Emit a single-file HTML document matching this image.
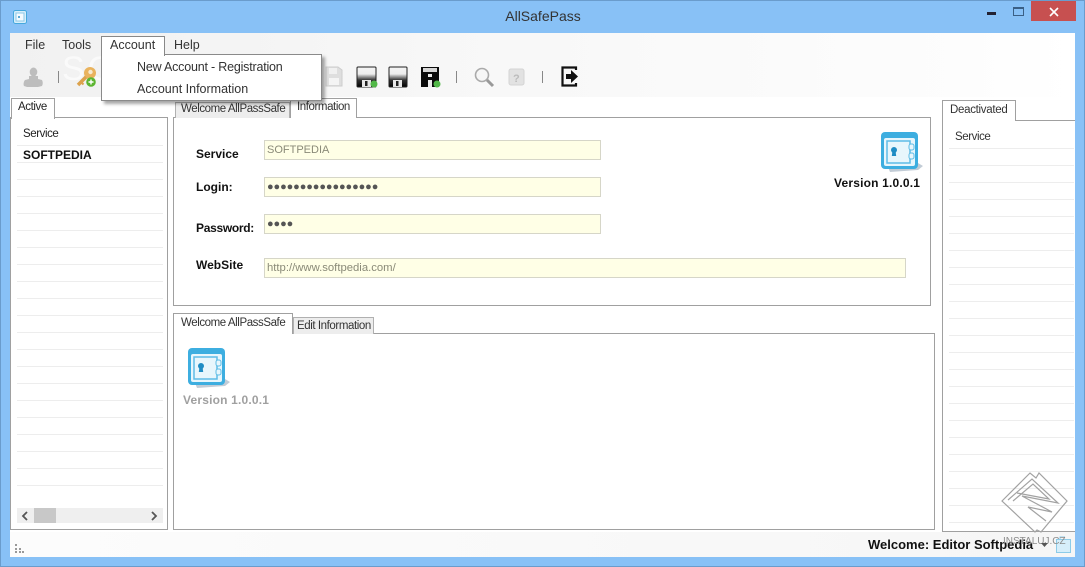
<!DOCTYPE html>
<html><head><meta charset="utf-8"><style>
html,body{margin:0;padding:0;width:1085px;height:567px;overflow:hidden;background:#88c1f6;font-family:"Liberation Sans",sans-serif;color:#222}
div,span{position:absolute;box-sizing:border-box;white-space:nowrap}
.t{font-size:11.5px;line-height:14px;letter-spacing:-.42px}
.m{font-size:12.5px;line-height:14px;color:#333}
.b{font-weight:bold;font-size:12px;line-height:14px;color:#111}
.f{background:#ffffe6;border:1px solid #d6d6c8;font-size:11.5px;line-height:18px;padding-left:2px;color:#8a8a78}
.box{background:#fff;border:1px solid #a0a0a0}
.ln{left:0;height:1px;background:#ededed}
</style></head><body>
<div style="left:0;top:0;width:1085px;height:567px;border:1px solid #6a9ccc"></div>
<!-- title -->
<svg style="position:absolute;left:13px;top:10px" width="14" height="14"><rect x=".5" y=".5" width="13" height="13" rx="2" fill="#d8effa" stroke="#45a8dc"/><rect x="3" y="3" width="8" height="8" fill="#f4fbff" stroke="#8cc8e8"/><circle cx="6" cy="7" r="1" fill="#2a8fc8"/></svg>
<div style="left:0;top:8px;width:1086px;text-align:center;font-size:14px;line-height:17px;color:#333">AllSafePass</div>
<div style="left:987px;top:12px;width:9px;height:3px;background:#223"></div>
<div style="left:1013px;top:7px;width:11px;height:9px;border:1px solid #3a5f85;border-top-width:2px"></div>
<div style="left:1031px;top:1px;width:45px;height:20px;background:#c75050"></div>
<svg style="position:absolute;left:1049px;top:7px" width="10" height="10"><path d="M1 1L9 9M9 1L1 9" stroke="#fff" stroke-width="1.600"/></svg>
<!-- client -->
<div style="left:10px;top:33px;width:1065px;height:524px;background:#fff"></div>
<div style="left:10px;top:33px;width:1065px;height:64px;background:linear-gradient(90deg,#f1f1f1,#f7f7f7 40%,#fdfdfd 90%,#fff)"></div>
<div style="left:10px;top:532px;width:1065px;height:25px;background:linear-gradient(90deg,#fcfcfc,#f6f6f6)"></div>
<div class="m" style="left:25px;top:38px">File</div>
<div class="m" style="left:62px;top:38px">Tools</div>
<div class="m" style="left:174px;top:38px">Help</div>
<div style="left:62px;top:52px;font-size:34px;line-height:34px;color:#fafafa;letter-spacing:3px">SOFTPEDIA</div>
<!-- toolbar -->
<svg style="position:absolute;left:20px;top:60px" width="580" height="32">
<defs><linearGradient id="g" x1="0" y1="0" x2="0" y2="1"><stop offset="0" stop-color="#f4f4f4"/><stop offset=".35" stop-color="#eee"/><stop offset=".65" stop-color="#333"/><stop offset="1" stop-color="#000"/></linearGradient></defs>
<g fill="#bdbdbd"><ellipse cx="13.500" cy="12" rx="3.800" ry="4.500"/><path d="M9 16h9v3l4 1c1 2 1 4 0 6l-4 1H7l-3-1c-1-2 0-5 1-6l4-1z"/></g>
<rect x="38" y="11" width="1" height="12" fill="#888"/>
<g transform="translate(56,6)"><ellipse cx="14" cy="7" rx="6" ry="6" fill="#e9b35e"/><circle cx="14.500" cy="6" r="2.200" fill="#f7ead0"/><path d="M10 11L2 19" stroke="#dca24c" stroke-width="3.500"/><path d="M5 16l2.500 2.500" stroke="#dca24c" stroke-width="2"/><circle cx="15" cy="16" r="4.800" fill="#5cb531"/><path d="M12.500 16h5M15 13.500v5" stroke="#fff" stroke-width="1.400"/></g>
<g transform="translate(306,7)"><path d="M0 0h12l4 3v16H0z" fill="#dedede" stroke="#cdcdcd"/><rect x="3" y="1" width="8" height="6" fill="#f0f0f0"/><rect x="3" y="11" width="10" height="7" fill="#f4f4f4"/></g>
<rect x="337" y="7" width="19" height="20" rx="1" fill="url(#g)" stroke="#222"/><rect x="342" y="20" width="9" height="7" fill="#e8e8e8"/><rect x="345" y="21" width="2.500" height="5" fill="#222"/><circle cx="354" cy="24" r="3.500" fill="#52b848"/>
<rect x="369" y="7" width="18" height="20" rx="1" fill="url(#g)" stroke="#222"/><rect x="373" y="20" width="9" height="7" fill="#e8e8e8"/><rect x="376" y="21" width="2.500" height="5" fill="#222"/>
<rect x="401" y="7" width="18" height="20" fill="#0c0c0c"/><rect x="403" y="8" width="14" height="4" fill="#d8d8d8"/><rect x="408" y="14" width="4" height="3" fill="#eee"/><rect x="408" y="20" width="4" height="7" fill="#eee"/><circle cx="417" cy="24" r="3.500" fill="#52b848"/>
<rect x="436" y="11" width="1" height="12" fill="#888"/>
<circle cx="462" cy="15" r="6.500" fill="#f6f6f6" stroke="#aaa" stroke-width="1.600"/><path d="M467 20l6 6" stroke="#999" stroke-width="3"/>
<rect x="489" y="9" width="15" height="16" rx="2" fill="#e2e2e2" stroke="#d4d4d4"/>
<text x="493" y="22" font-size="11" font-weight="bold" fill="#bbb" font-family="Liberation Sans">?</text>
<rect x="522" y="11" width="1" height="12" fill="#888"/>
<path d="M556 10v-2.500h-13.500v18h13.500v-2.500" fill="none" stroke="#111" stroke-width="2.200"/><path d="M546 14h5v-4l7 6.500-7 6.500v-4h-5z" fill="#111"/>
</svg>
<!-- left panel -->
<div class="box" style="left:10px;top:117px;width:158px;height:413px"></div>
<div style="left:11px;top:98px;width:44px;height:21px;background:#fff;border:1px solid #a0a0a0;border-bottom:0"></div>
<div class="t" style="left:18px;top:100px">Active</div>
<div style="left:17px;top:125px;width:146px;height:378px;overflow:hidden">
<div class="t" style="left:6px;top:2px">Service</div>
<div class="ln" style="top:20px;width:146px"></div>
<div class="b" style="left:6px;top:23px">SOFTPEDIA</div>
<div style="left:0;top:37px;width:146px;height:340px;background:repeating-linear-gradient(#ededed 0,#ededed 1px,#fff 1px,#fff 17px)"></div>
</div>
<div style="left:17px;top:508px;width:146px;height:15px;background:#efefef"></div>
<div style="left:34px;top:508px;width:22px;height:15px;background:#c8c8c8"></div>
<svg style="position:absolute;left:21px;top:511px" width="140" height="10"><path d="M6 1L2 5l4 4M131 1l4 4-4 4" fill="none" stroke="#555" stroke-width="1.800"/></svg>
<!-- top panel -->
<div class="box" style="left:173px;top:117px;width:758px;height:189px"></div>
<div style="left:175px;top:102px;width:115px;height:16px;background:#ededed;border:1px solid #b0b0b0;border-bottom:0"></div>
<div class="t" style="left:181px;top:102px;color:#333">Welcome AllPassSafe</div>
<div style="left:290px;top:98px;width:67px;height:20px;background:#fff;border:1px solid #a0a0a0;border-bottom:0"></div>
<div class="t" style="left:297px;top:100px;color:#333">Information</div>
<div class="b" style="left:196px;top:147px">Service</div>
<div class="b" style="left:196px;top:180px">Login:</div>
<div class="b" style="left:196px;top:221px;letter-spacing:-.3px">Password:</div>
<div class="b" style="left:196px;top:258px">WebSite</div>
<div class="f" style="left:264px;top:140px;width:337px;height:20px;font-size:11px">SOFTPEDIA</div>
<div class="f" style="left:264px;top:177px;width:337px;height:20px;color:#555;letter-spacing:-.1px;font-size:11px">●●●●●●●●●●●●●●●●●</div>
<div class="f" style="left:264px;top:214px;width:337px;height:20px;color:#555;letter-spacing:-.1px;font-size:11px">●●●●</div>
<div class="f" style="left:264px;top:258px;width:642px;height:20px;font-size:11.3px">http://www.softpedia.com/</div>
<svg style="position:absolute;left:880px;top:131px" width="44" height="42"><path d="M8 36l30-4 5 3-5 4-28 2z" fill="#c2ccd6"/><rect x="1" y="1" width="37" height="37" rx="4" fill="#3daee0"/><rect x="4" y="7" width="31" height="28" rx="2" fill="#e8f6fc"/><rect x="7" y="10" width="23" height="22" fill="none" stroke="#5dbce6" stroke-width="1.500"/><circle cx="14" cy="19" r="3" fill="#1f8cc4"/><path d="M12.500 20h3l.7 5h-4.400z" fill="#1f8cc4"/><rect x="29" y="13" width="5" height="6" rx="2" fill="#e8f6fc" stroke="#5dbce6"/><rect x="29" y="22" width="5" height="6" rx="2" fill="#e8f6fc" stroke="#5dbce6"/></svg>
<div class="b" style="left:834px;top:176px;letter-spacing:.18px">Version 1.0.0.1</div>
<!-- bottom panel -->
<div class="box" style="left:173px;top:333px;width:762px;height:197px"></div>
<div style="left:293px;top:317px;width:81px;height:17px;background:#ededed;border:1px solid #b0b0b0;border-bottom:0"></div>
<div class="t" style="left:297px;top:319px;color:#333">Edit Information</div>
<div style="left:173px;top:313px;width:120px;height:21px;background:#fff;border:1px solid #a0a0a0;border-bottom:0"></div>
<div class="t" style="left:181px;top:316px;color:#333">Welcome AllPassSafe</div>
<svg style="position:absolute;left:187px;top:347px" width="44" height="42"><path d="M8 36l30-4 5 3-5 4-28 2z" fill="#c2ccd6"/><rect x="1" y="1" width="37" height="37" rx="4" fill="#3daee0"/><rect x="4" y="7" width="31" height="28" rx="2" fill="#e8f6fc"/><rect x="7" y="10" width="23" height="22" fill="none" stroke="#5dbce6" stroke-width="1.500"/><circle cx="14" cy="19" r="3" fill="#1f8cc4"/><path d="M12.500 20h3l.7 5h-4.400z" fill="#1f8cc4"/><rect x="29" y="13" width="5" height="6" rx="2" fill="#e8f6fc" stroke="#5dbce6"/><rect x="29" y="22" width="5" height="6" rx="2" fill="#e8f6fc" stroke="#5dbce6"/></svg>
<div class="b" style="left:183px;top:393px;letter-spacing:.18px;color:#a0a0a0">Version 1.0.0.1</div>
<!-- right panel -->
<div class="box" style="left:942px;top:120px;width:133px;height:412px;border-right:0"></div>
<div style="left:942px;top:100px;width:74px;height:21px;background:#fff;border:1px solid #a0a0a0;border-bottom:0"></div>
<div class="t" style="left:950px;top:103px;color:#333;letter-spacing:-.3px">Deactivated</div>
<div class="t" style="left:955px;top:130px;color:#333">Service</div>
<div style="left:949px;top:148px;width:125px;height:382px;background:repeating-linear-gradient(#ededed 0,#ededed 1px,#fff 1px,#fff 17px)"></div>
<!-- status -->
<div style="left:868px;top:537px;font-size:13px;line-height:16px;font-weight:bold;color:#111">Welcome: Editor Softpedia</div>
<svg style="position:absolute;left:1056px;top:536px" width="16" height="17"><rect x=".5" y="3.500" width="14" height="13" fill="#d6eefa" stroke="#8ccbe8"/><path d="M4 3V1h5" fill="none" stroke="#8ccbe8"/></svg>
<svg style="position:absolute;left:1000px;top:470px" width="72" height="82"><g fill="none" stroke="#a2a2a2" stroke-width="1.200"><path d="M2 31L30 3l6 5 3-5 28 28-26 31-4-2-2 2z"/><path d="M8 30L32 9l26 24-36-7 30 16-24-5 18 14"/><path d="M13 31L33 14l16 15-32-6"/></g><text x="3" y="74" font-size="10" fill="#8c8c8c" font-family="Liberation Sans">INSTALUJ.CZ</text></svg>
<svg style="position:absolute;left:1041px;top:543px" width="7" height="4"><path d="M0 0h7L3.500 4z" fill="#555"/></svg>
<svg style="position:absolute;left:13px;top:543px" width="11" height="11" fill="#999"><rect x="2" y="1" width="2" height="2"/><rect x="2" y="5" width="2" height="2"/><rect x="6" y="5" width="2" height="2"/><rect x="2" y="8" width="2" height="2"/><rect x="6" y="8" width="2" height="2"/><rect x="9" y="8" width="2" height="2"/></svg>
<!-- menu -->
<div style="left:101px;top:36px;width:64px;height:20px;background:#fff;border:1px solid #888;border-bottom:0;z-index:3"></div>
<div class="m" style="left:110px;top:38px;z-index:5">Account</div>
<div style="left:101px;top:54px;width:221px;height:47px;background:#fff;border:1px solid #8a8a8a;box-shadow:3px 3px 3px rgba(0,0,0,.35);z-index:2"></div>
<div style="left:102px;top:54px;width:62px;height:3px;background:#fff;z-index:4"></div>
<div class="m" style="left:137px;top:60px;z-index:5;letter-spacing:-.2px">New Account - Registration</div>
<div class="m" style="left:137px;top:82px;z-index:5">Account Information</div>
</body></html>
